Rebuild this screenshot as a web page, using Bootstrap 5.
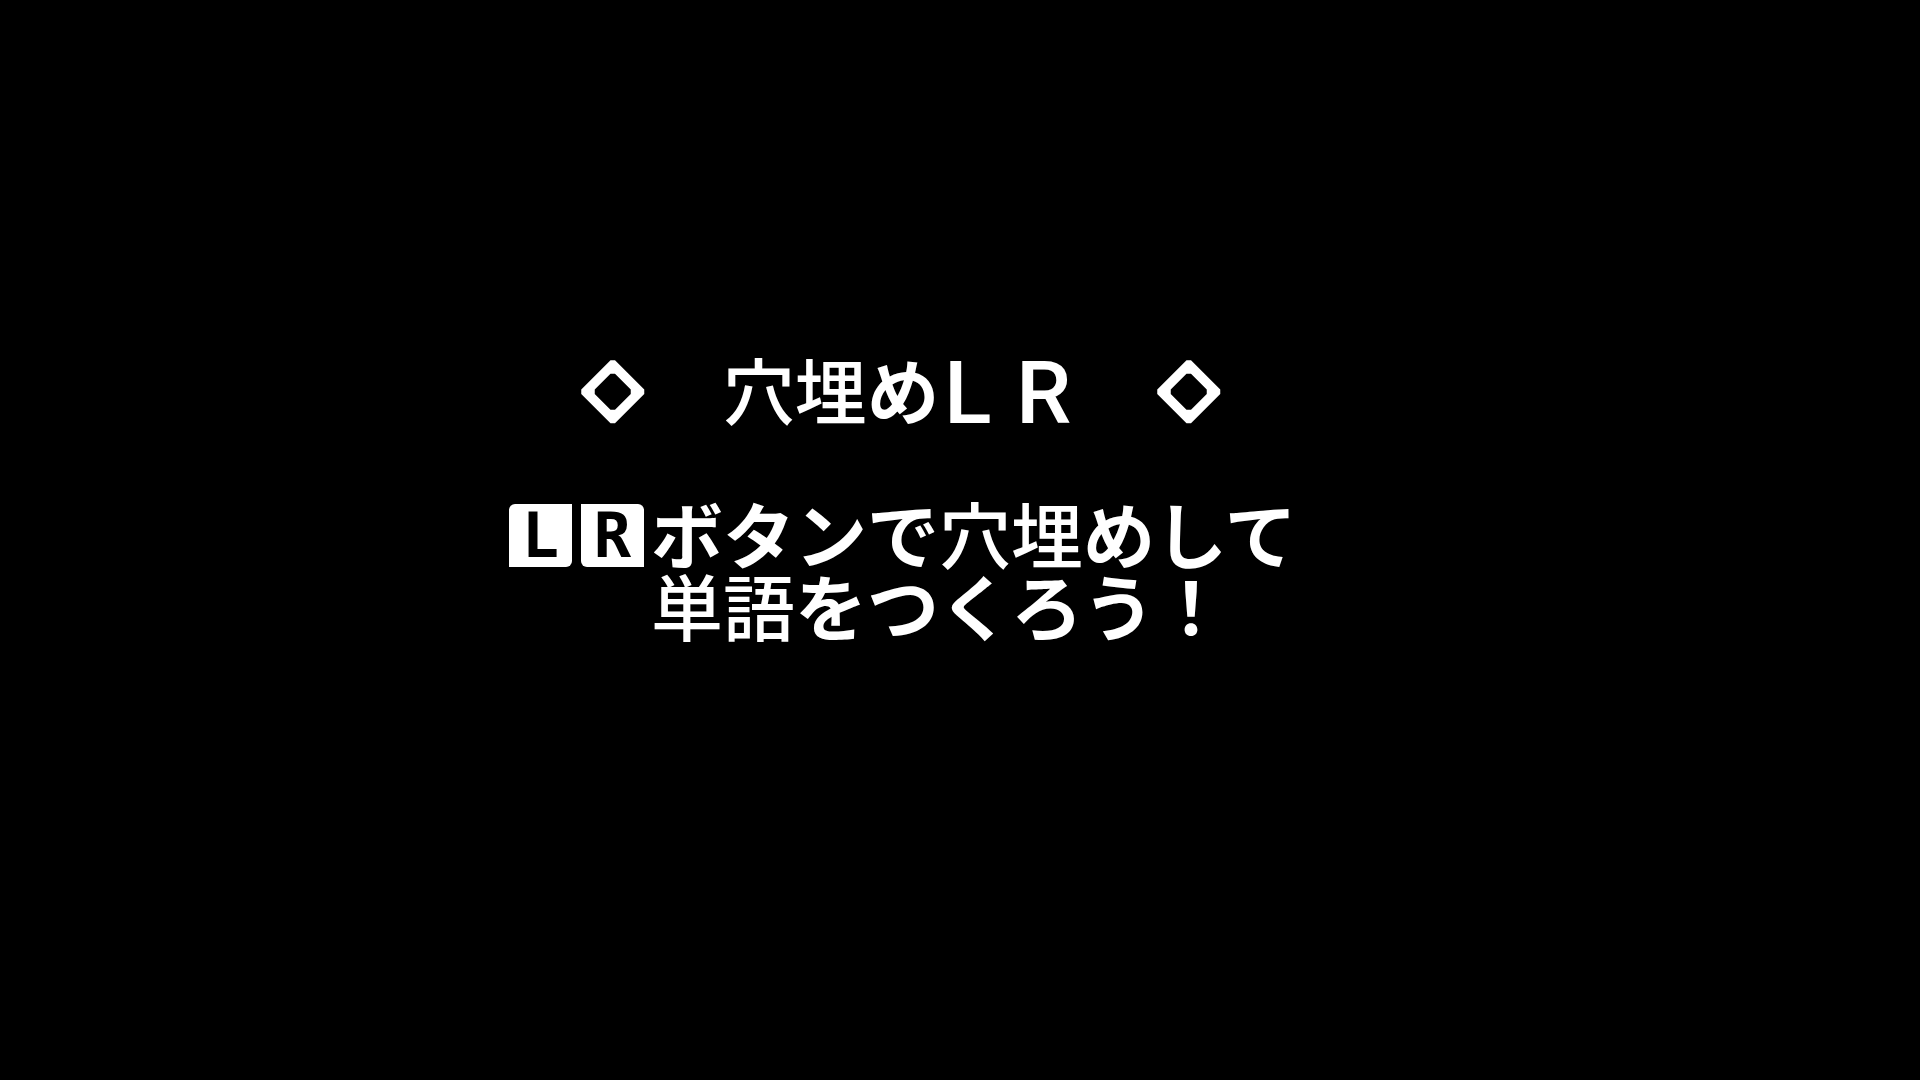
<!DOCTYPE html>
<html lang="ja">
<head>
<meta charset="utf-8">
<meta name="viewport" content="width=device-width, initial-scale=1">
<title>穴埋めＬＲ</title>
<link href="https://cdn.jsdelivr.net/npm/bootstrap@5.3.0/dist/css/bootstrap.min.css" rel="stylesheet">
<style>
body { background: #000; color: #fff; font-family: "Noto Sans CJK JP", sans-serif; }
.screen { padding: 358px 24px 24px 26.4%; }
.msg { width: 792px; max-width: 100%; gap: 72px; }
.line { height: 72px; font-size: 72px; line-height: 60px; font-weight: 700; white-space: nowrap; }
.kanji { font-weight: 500; }
.cell { width: 72px; height: 72px; flex: none; }
.latin { padding-left: 5px; font-family: Roboto, sans-serif; font-size: 88px; line-height: 70px; font-weight: 500; }
.key { width: 63px; height: 63px; margin: 2px 7px 7px 2px; padding: 0; flex: none; background: #fff; color: #000;
  font: 700 62px/63px "DejaVu Sans Mono", monospace; text-align: center; }
.key-l { border-radius: 6px 0 6px 0; }
.key-r { border-radius: 0 6px 0 6px; }
.title-text { margin: 0 72px; }
.second { padding-left: 144px; }
</style>
<script src="https://cdn.jsdelivr.net/npm/bootstrap@5.3.0/dist/js/bootstrap.bundle.min.js"></script>
</head>
<body>
<svg class="d-none" aria-hidden="true">
  <symbol id="diamond" viewBox="0 0 16 16">
    <path fill="#fff" fill-rule="evenodd" d="M7 .5H8L14.5 7V8L8 14.5H7L.5 8V7z M7 3.5L3.5 7V8L7 11.5H8L11.5 8V7L8 3.5z"/>
  </symbol>
</svg>
<main class="screen">
  <div class="msg d-flex flex-column">
    <h1 class="line d-flex justify-content-center m-0">
      <svg class="cell" aria-hidden="true"><use href="#diamond"/></svg>
      <span class="title-text d-flex"><span><span class="kanji">穴埋</span>め</span><span class="cell latin">L</span><span class="cell latin">R</span></span>
      <svg class="cell" aria-hidden="true"><use href="#diamond"/></svg>
    </h1>
    <div>
      <p class="line d-flex m-0"><kbd class="key key-l">L</kbd><kbd class="key key-r">R</kbd><span>ボタンで<span class="kanji">穴埋</span>めして</span></p>
      <p class="line second m-0"><span class="kanji">単語</span>をつくろう！</p>
    </div>
  </div>
</main>
</body>
</html>
